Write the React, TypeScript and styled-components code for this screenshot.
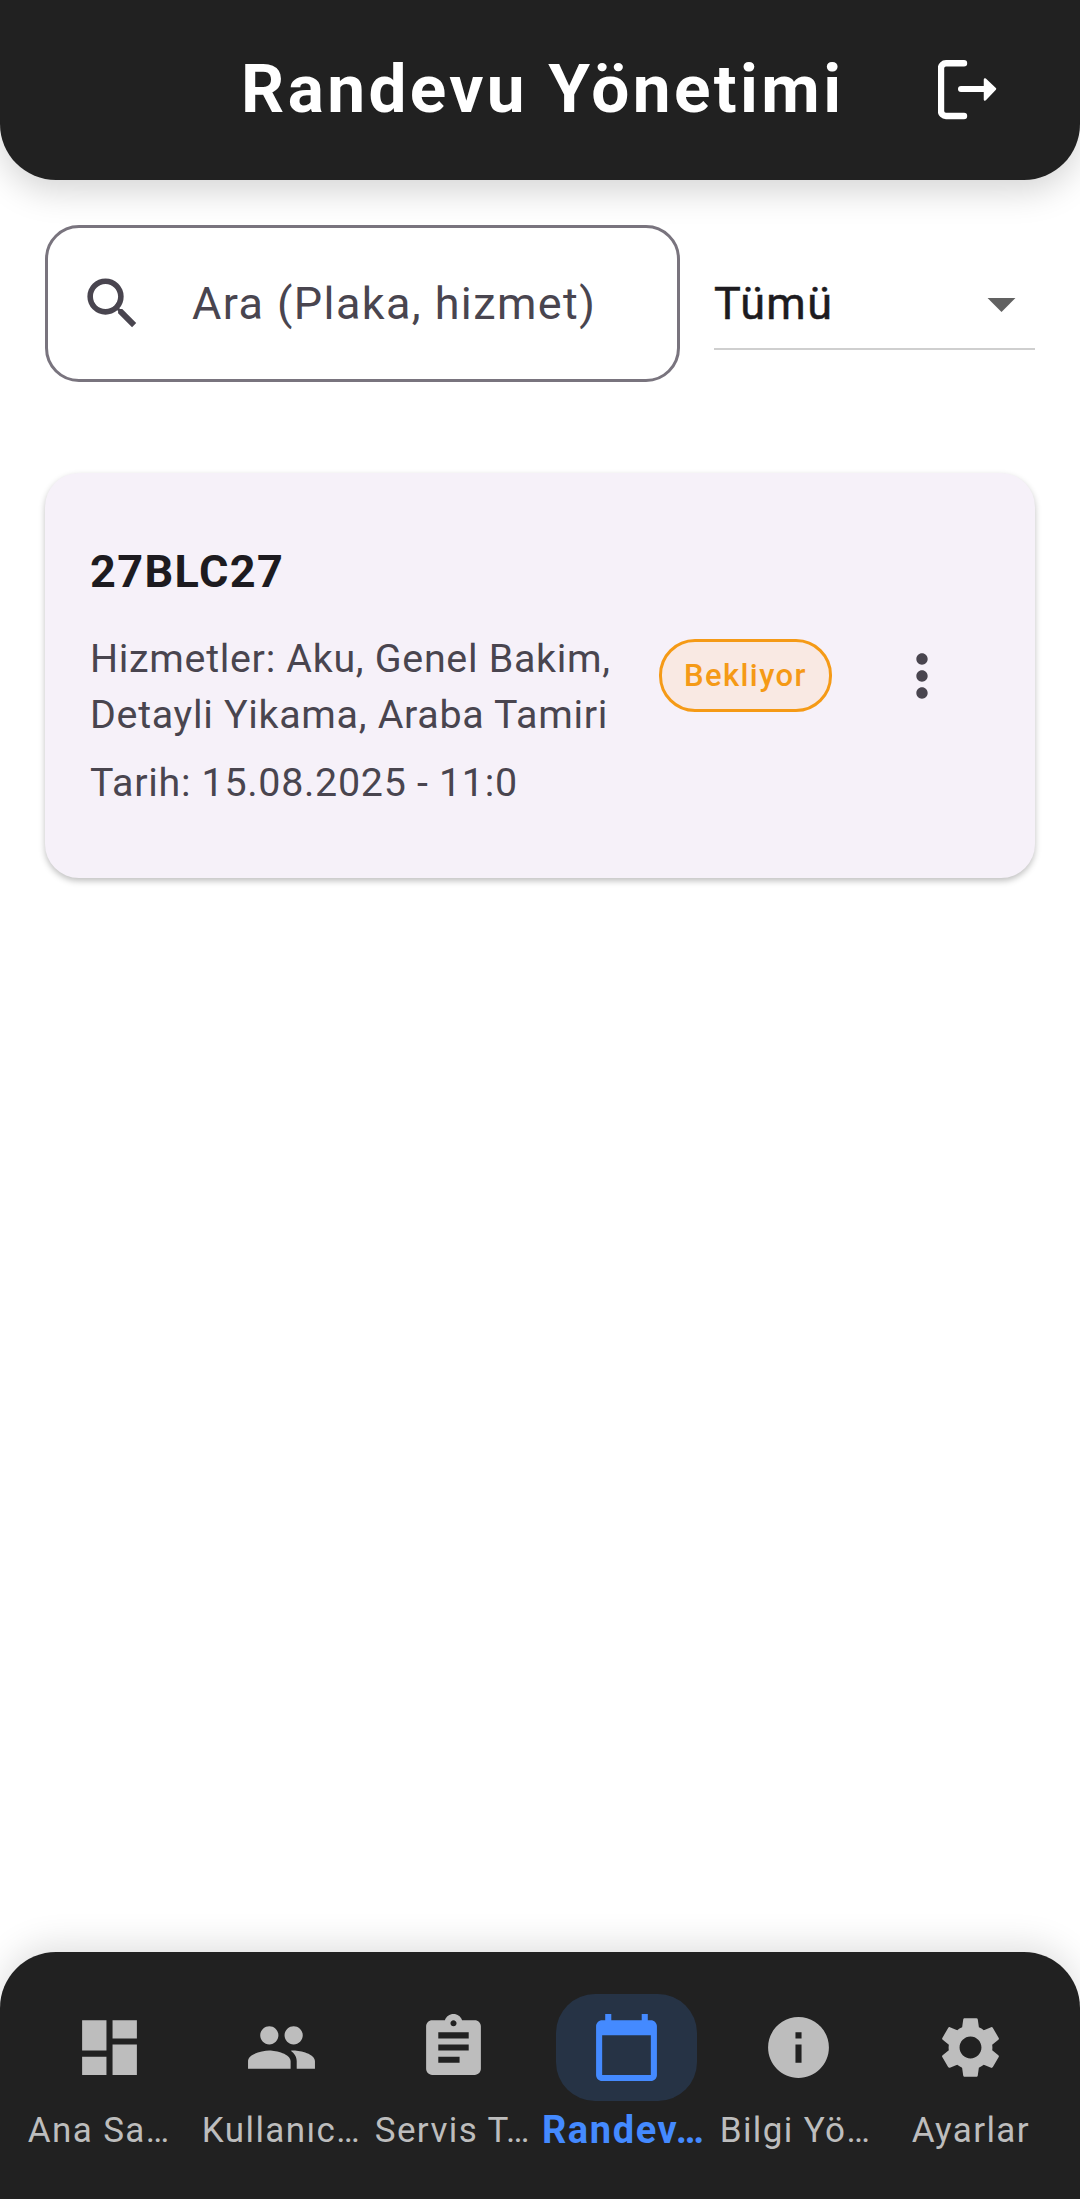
import { createGlobalStyle } from 'styled-components';
import styled from 'styled-components';
import {
  MdArrowDropDown,
  MdAssignment,
  MdCalendarToday,
  MdDashboard,
  MdInfo,
  MdMoreVert,
  MdPeople,
  MdSearch,
  MdSettings,
} from 'react-icons/md';
import type { ComponentType } from 'react';

const GlobalStyle = createGlobalStyle`
  * {
    box-sizing: border-box;
  }

  html,
  body {
    margin: 0;
    padding: 0;
    background: #ffffff;
    font-family: Roboto, "Liberation Sans", sans-serif;
  }
`;

const Screen = styled.div`
  width: 1080px;
  height: 2199px;
  display: flex;
  flex-direction: column;
  background: #ffffff;
  overflow: hidden;
`;

const Header = styled.header`
  height: 180px;
  flex-shrink: 0;
  display: flex;
  align-items: center;
  padding: 0 82px 0 241px;
  background: #212121;
  border-radius: 0 0 56px 56px;
  box-shadow: 0 11px 34px rgba(0, 0, 0, 0.17);
  z-index: 2;
`;

const Title = styled.h1`
  flex: 1;
  margin: 0 0 3px;
  font-size: 67.5px;
  font-weight: 700;
  letter-spacing: 3.4px;
  color: #ffffff;
  white-space: nowrap;
`;

const LogoutButton = styled.div`
  display: flex;
`;

const Main = styled.main`
  flex: 1;
  display: flex;
  flex-direction: column;
  gap: 91px;
  padding: 45px 45px 0;
`;

const FilterRow = styled.div`
  display: flex;
  align-items: center;
  gap: 34px;
`;

const SearchBox = styled.div`
  width: 635px;
  height: 157px;
  display: flex;
  align-items: center;
  gap: 46px;
  padding: 0 20px 0 31px;
  border: 3px solid #79747e;
  border-radius: 34px;
  color: #49454f;
`;

const SearchPlaceholder = styled.span`
  font-size: 45px;
  letter-spacing: 1.4px;
  white-space: nowrap;
`;

const Select = styled.div`
  width: 321px;
  height: 92px;
  display: flex;
  align-items: center;
  justify-content: space-between;
  padding-top: 2px;
  border-bottom: 2px solid #cfcfcf;
  color: #1d1b20;
`;

const SelectValue = styled.span`
  font-size: 45px;
  font-weight: 400;
  letter-spacing: 1.4px;
  -webkit-text-stroke: 0.5px #1d1b20;
`;

const SelectArrow = styled.span`
  display: flex;
  color: #616161;
`;

const Card = styled.article`
  height: 405px;
  display: flex;
  align-items: center;
  padding: 0 45px;
  background: #f6f1f9;
  border-radius: 34px;
  box-shadow: 0 3px 6px rgba(0, 0, 0, 0.25);
`;

const CardBody = styled.div`
  width: 569px;
  flex-shrink: 0;
`;

const Plate = styled.h2`
  margin: 0 0 28px;
  font-size: 45px;
  font-weight: 700;
  letter-spacing: 1.4px;
  line-height: 62px;
  color: #1d1b20;
`;

const Detail = styled.p`
  margin: 0 0 12px;
  font-size: 39.4px;
  letter-spacing: 0.7px;
  line-height: 56px;
  color: #49454f;

  &:last-child {
    margin-bottom: 0;
  }
`;

const StatusBadge = styled.span`
  padding: 0 22px;
  height: 73px;
  display: flex;
  align-items: center;
  font-size: 31px;
  font-weight: 500;
  letter-spacing: 1.4px;
  color: #f59a16;
  background: #f9e9e3;
  border: 3px solid #f59a16;
  border-radius: 36px;
`;

const MoreButton = styled.div`
  display: flex;
  margin-left: 56px;
  color: #49454f;
`;

const BottomNav = styled.nav`
  height: 247px;
  flex-shrink: 0;
  display: grid;
  grid-template-columns: repeat(6, 1fr);
  padding: 42px 23px 0;
  background: #212121;
  border-radius: 56px 56px 0 0;
  box-shadow: 0 -8px 34px rgba(0, 0, 0, 0.12);
  z-index: 2;
`;

const NavItem = styled.div`
  min-width: 0;
  display: flex;
  flex-direction: column;
  align-items: center;
`;

const NavIconWrap = styled.div<{ $active?: boolean }>`
  width: 141px;
  height: 107px;
  display: flex;
  align-items: center;
  justify-content: center;
  border-radius: 39px;
  color: ${({ $active }) => ($active ? '#448aff' : '#bdbdbd')};
  background: ${({ $active }) => ($active ? '#263345' : 'transparent')};
`;

const NavLabel = styled.span<{ $active?: boolean; $trail?: number }>`
  margin-top: 9px;
  padding-right: ${({ $trail }) => $trail ?? 0}px;
  white-space: nowrap;
  font-size: ${({ $active }) => ($active ? 38 : 35)}px;
  line-height: 41px;
  font-weight: ${({ $active }) => ($active ? 700 : 400)};
  letter-spacing: ${({ $active }) => ($active ? 1.6 : 1.4)}px;
  color: ${({ $active }) => ($active ? '#448aff' : '#bdbdbd')};
`;

type NavEntry = {
  label: string;
  icon: ComponentType<{ size?: number }>;
  active?: boolean;
  trail?: number;
};

// labels as the screen shows them, already shortened
const navEntries: NavEntry[] = [
  { label: 'Ana Sa…', icon: MdDashboard, trail: 20 },
  { label: 'Kullanıc…', icon: MdPeople },
  { label: 'Servis T…', icon: MdAssignment, trail: 2 },
  { label: 'Randev…', icon: MdCalendarToday, active: true, trail: 5 },
  { label: 'Bilgi Yö…', icon: MdInfo, trail: 6 },
  { label: 'Ayarlar', icon: MdSettings },
];

function LogoutIcon() {
  return (
    <svg width="60" height="60" viewBox="0 0 60 60" fill="none">
      <path
        d="M26 3.2H8a5 5 0 0 0-5 5V51a5 5 0 0 0 5 5H26"
        stroke="#ffffff"
        strokeWidth="6.4"
        strokeLinecap="round"
      />
      <path d="M23 29H47" stroke="#ffffff" strokeWidth="6" strokeLinecap="round" />
      <path d="M47 19.5L57 29L47 39.5Z" fill="#ffffff" stroke="#ffffff" strokeWidth="2.5" strokeLinejoin="round" />
    </svg>
  );
}

export default function App() {
  return (
    <Screen>
      <GlobalStyle />
      <Header>
        <Title>Randevu Yönetimi</Title>
        <LogoutButton>
          <LogoutIcon />
        </LogoutButton>
      </Header>

      <Main>
        <FilterRow>
          <SearchBox>
            <MdSearch size={67} />
            <SearchPlaceholder>Ara (Plaka, hizmet)</SearchPlaceholder>
          </SearchBox>
          <Select>
            <SelectValue>Tümü</SelectValue>
            <SelectArrow>
              <MdArrowDropDown size={67} />
            </SelectArrow>
          </Select>
        </FilterRow>

        <Card>
          <CardBody>
            <Plate>27BLC27</Plate>
            <Detail>Hizmetler: Aku, Genel Bakim, Detayli Yikama, Araba Tamiri</Detail>
            <Detail>Tarih: 15.08.2025 - 11:0</Detail>
          </CardBody>
          <StatusBadge>Bekliyor</StatusBadge>
          <MoreButton>
            <MdMoreVert size={68} />
          </MoreButton>
        </Card>
      </Main>

      <BottomNav>
        {navEntries.map(({ label, icon: Icon, active, trail }) => (
          <NavItem key={label}>
            <NavIconWrap $active={active}>
              <Icon size={73} />
            </NavIconWrap>
            <NavLabel $active={active} $trail={trail}>
              {label}
            </NavLabel>
          </NavItem>
        ))}
      </BottomNav>
    </Screen>
  );
}
